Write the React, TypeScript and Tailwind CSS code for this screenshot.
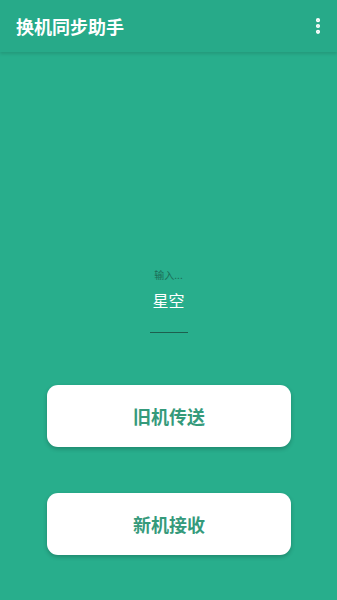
import { EllipsisVertical } from "lucide-react";

const font = { fontFamily: '"Noto Sans CJK SC", "Noto Sans", sans-serif' };

export default function App() {
  return (
    <div className="flex h-[600px] w-[337px] flex-col bg-[#28ae8c]" style={font}>
      {/* Toolbar */}
      <header className="flex h-[52px] items-center justify-between bg-[#27aa89] pl-4 pr-[9px] shadow-[0_2px_3px_rgba(0,0,0,0.12)]">
        <h1 className="text-[18px] font-bold leading-none text-white">换机同步助手</h1>
        <EllipsisVertical className="h-[20px] w-[20px] text-white" strokeWidth={3} />
      </header>

      {/* Input area */}
      <div className="flex flex-col items-center pt-[218px]">
        <span className="text-[10px] leading-none text-[#1b6d57]">输入...</span>
        <span className="mt-[12px] text-[16px] leading-none text-white">星空</span>
        <div className="mt-[24px] h-px w-[38px] bg-[#1d5f4e]" />
      </div>

      {/* Actions */}
      <div className="mt-[52px] flex flex-col gap-[46px] pl-[47px] pr-[46px]">
        <button className="h-[62px] rounded-[11px] bg-white text-[18px] font-bold text-[#359a7b] shadow-[0_2px_4px_rgba(0,0,0,0.22)]">
          旧机传送
        </button>
        <button className="h-[62px] rounded-[11px] bg-white text-[18px] font-bold text-[#359a7b] shadow-[0_2px_4px_rgba(0,0,0,0.22)]">
          新机接收
        </button>
      </div>
    </div>
  );
}
